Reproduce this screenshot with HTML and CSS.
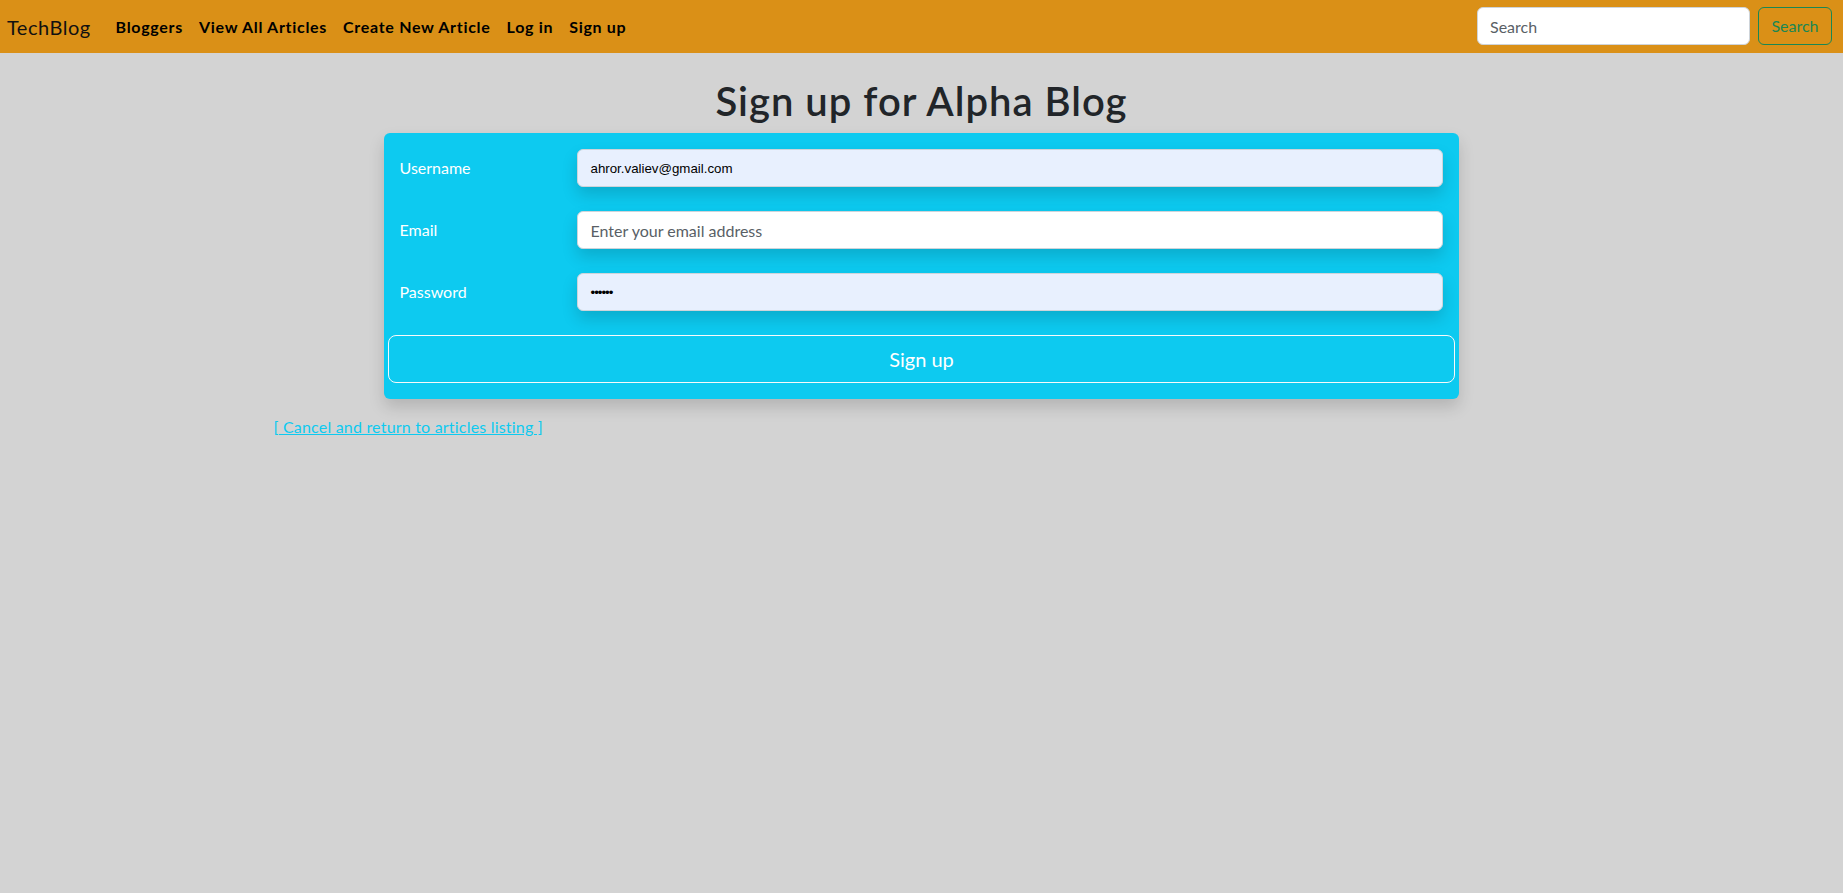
FILE: index.html
```html
<!DOCTYPE html>
<html lang="en">
<head>
<meta charset="utf-8">
<title>Sign up for Alpha Blog</title>
<link rel="stylesheet" href="styles.css">
</head>
<body>
<nav class="navbar">
  <a class="brand" href="#">TechBlog</a>
  <ul class="nav-links">
    <li><a href="#">Bloggers</a></li>
    <li><a href="#">View All Articles</a></li>
    <li><a href="#">Create New Article</a></li>
    <li><a href="#">Log in</a></li>
    <li><a href="#">Sign up</a></li>
  </ul>
  <form class="search">
    <input class="search-input" type="search" placeholder="Search">
    <button class="search-btn" type="button">Search</button>
  </form>
</nav>

<main class="container">
  <h1 class="title">Sign up for Alpha Blog</h1>
  <div class="row-center">
    <div class="col-10">
      <form class="card">
        <div class="field">
          <label class="label" for="u">Username</label>
          <div class="control"><input id="u" class="input autofill" type="text" value="ahror.valiev@gmail.com"></div>
        </div>
        <div class="field">
          <label class="label" for="e">Email</label>
          <div class="control"><input id="e" class="input" type="email" placeholder="Enter your email address"></div>
        </div>
        <div class="field">
          <label class="label" for="p">Password</label>
          <div class="control"><input id="p" class="input autofill pw" type="text" value="••••••"></div>
        </div>
        <div class="actions">
          <button class="submit" type="button">Sign up</button>
        </div>
      </form>
    </div>
  </div>
  <a class="cancel" href="#">[ Cancel and return to articles listing ]</a>
</main>
</body>
</html>
```

FILE: styles.css
```css
* { box-sizing: border-box; }

body {
  margin: 0;
  background: #d3d3d3;
  font-family: Lato, "Open Sans", sans-serif;
  font-size: 16px;
  line-height: 1.5;
  color: #212529;
}

/* navbar */
.navbar {
  height: 53px;
  background: #da9017;
  display: flex;
  align-items: center;
  padding: 0 11px 0 7px;
}
.brand {
  font-size: 20px;
  letter-spacing: 0.5px;
  color: #111;
  text-decoration: none;
  margin-right: 17px;
  line-height: 30px;
}
.nav-links {
  display: flex;
  list-style: none;
  margin: 0;
  padding: 0;
  flex: 1;
}
.nav-links a {
  display: block;
  padding: 8px 8px;
  font-weight: 700;
  letter-spacing: 0.7px;
  color: #000;
  text-decoration: none;
}
.search {
  display: flex;
  align-items: center;
  gap: 8px;
  margin-top: -1px;
}
.search-input {
  width: 273px;
  height: 38px;
  border: 1px solid #ced4da;
  border-radius: 6px;
  background: #fff;
  padding: 6px 12px;
  font: inherit;
  color: #212529;
}
.search-input::placeholder { color: #595f66; }
.search-btn {
  width: 74px;
  height: 38px;
  border: 1px solid #198754;
  border-radius: 6px;
  background: transparent;
  color: #198754;
  font: inherit;
  padding: 6px 0;
}

/* page */
.container {
  max-width: 1320px;
  margin: 0 auto;
  padding: 0 12px;
}
.title {
  text-align: center;
  font-size: 40px;
  font-weight: 600;
  letter-spacing: 1px;
  line-height: 1.2;
  margin: 24px 0 8px;
}
.row-center {
  display: flex;
  justify-content: center;
  margin: 0 -12px;
}
.col-10 {
  width: 83.3333%;
  padding: 0 12px;
}
.card {
  background: #0dcaf0;
  border-radius: 6px;
  padding: 16px;
  margin: 0 0 16px;
  box-shadow: 0 8px 16px rgba(0, 0, 0, 0.15);
}
.field {
  display: flex;
  align-items: center;
  margin: 0 -12px 24px;
}
.label {
  width: 16.6667%;
  padding: 7px 12px;
  color: #fff;
}
.control {
  width: 83.3333%;
  padding: 0 12px;
}
.input {
  display: block;
  width: 100%;
  height: 38px;
  border: 1px solid #ced4da;
  border-radius: 6px;
  background: #fff;
  padding: 6px 12px;
  font: inherit;
  color: #212529;
  box-shadow: 0 8px 16px rgba(0, 0, 0, 0.15);
}
.input::placeholder { color: #595f66; }
.input.autofill {
  background: #e8f0fe;
  font-family: "Liberation Sans", Arial, sans-serif;
  font-size: 13.3px;
  color: #000;
}
.input.pw { letter-spacing: -1px; }
.actions {
  margin: 0 -12px;
}
.submit {
  display: block;
  width: 100%;
  height: 48px;
  border: 1px solid #f8f9fa;
  border-radius: 8px;
  background: transparent;
  color: #fff;
  font: inherit;
  font-size: 20px;
  padding: 8px 16px;
}
.cancel {
  color: #0dcaf0;
  letter-spacing: 0.2px;
  text-decoration: underline;
}
```
